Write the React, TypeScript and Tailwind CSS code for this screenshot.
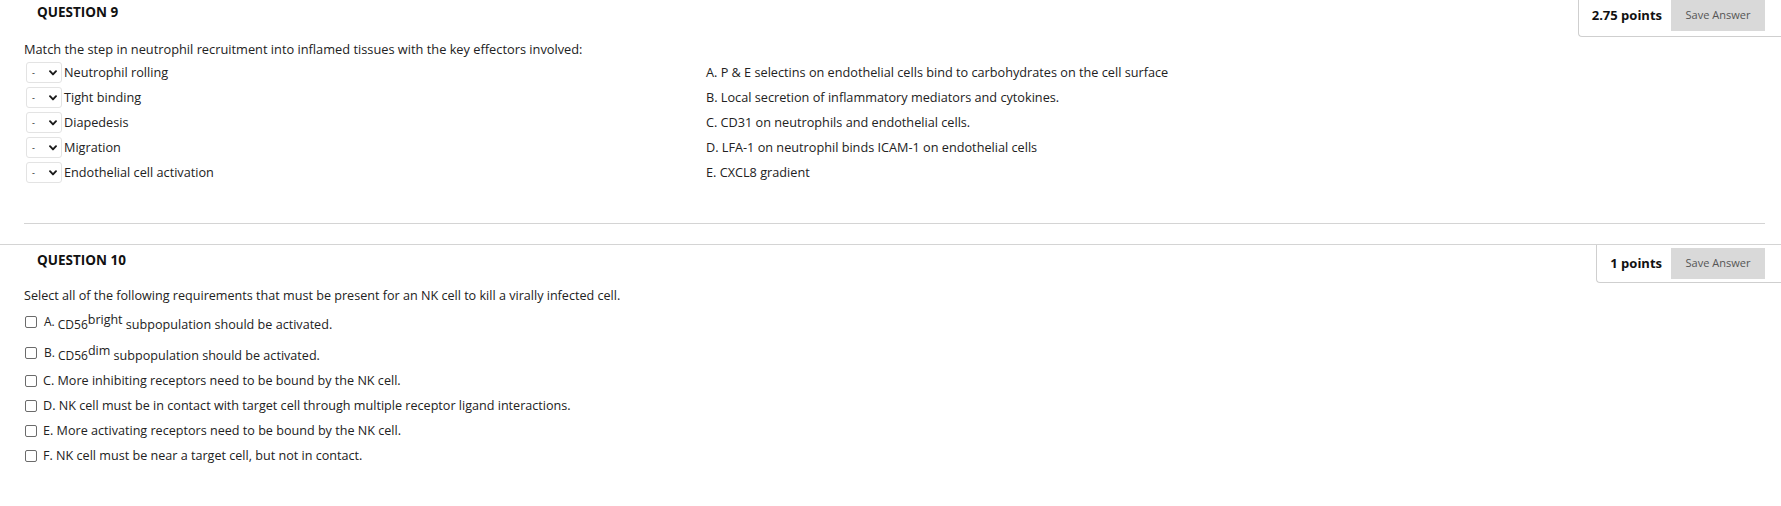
import React from "react";

const font = { fontFamily: '"Open Sans", "Liberation Sans", sans-serif' };

function Chevron() {
  return (
    <svg width="8" height="6" viewBox="0 0 8 6" className="block">
      <path d="M1 1.2 L4 4.4 L7 1.2" stroke="#1a1a1a" strokeWidth="1.9" fill="none" strokeLinecap="round" strokeLinejoin="round" />
    </svg>
  );
}

function MiniSelect() {
  return (
    <div className="w-[36px] h-[21px] shrink-0 border border-[#e3e3e3] rounded-[3px] flex items-center pl-[5px]">
      <span className="text-[9px] leading-none text-[#222] w-[17px]">-</span>
      <Chevron />
    </div>
  );
}

function Box() {
  return <span className="inline-block w-[12px] h-[12px] shrink-0 border border-[#6b6b6b] rounded-[2px] bg-white" />;
}

function PointsBox({ label, extra }: { label: string; extra: string }) {
  return (
    <div className={`flex items-start border-l border-b border-[#cfcfcf] rounded-bl-[4px] pl-[13px] pr-[16px] ${extra}`}>
      <div className="h-[31px] flex items-center font-bold text-[13px] text-[#111]">{label}</div>
      <div className="w-[94px] h-[31px] ml-[9px] bg-[#d9d9d9] flex items-center justify-center text-[11px] text-[#555]">
        Save Answer
      </div>
    </div>
  );
}

export default function App() {
  const steps = ["Neutrophil rolling", "Tight binding", "Diapedesis", "Migration", "Endothelial cell activation"];
  const effectors = [
    "A. P & E selectins on endothelial cells bind to carbohydrates on the cell surface",
    "B. Local secretion of inflammatory mediators and cytokines.",
    "C. CD31 on neutrophils and endothelial cells.",
    "D. LFA-1 on neutrophil binds ICAM-1 on endothelial cells",
    "E. CXCL8 gradient",
  ];
  const simple = [
    "C. More inhibiting receptors need to be bound by the NK cell.",
    "D. NK cell must be in contact with target cell through multiple receptor ligand interactions.",
    "E. More activating receptors need to be bound by the NK cell.",
    "F. NK cell must be near a target cell, but not in contact.",
  ];
  return (
    <div className="w-[1781px] h-[506px] bg-white text-[#222] overflow-hidden" style={font}>
      {/* Question 9 */}
      <section>
        <div className="flex justify-between items-start h-[37px]">
          <h2 className="pl-[37px] pt-[3px] text-[13.5px] leading-[18px] font-bold text-[#111]">QUESTION 9</h2>
          <PointsBox label="2.75 points" extra="h-[37px]" />
        </div>
        <p className="ml-[24px] mt-[3px] text-[12.8px] leading-[18px]">
          Match the step in neutrophil recruitment into inflamed tissues with the key effectors involved:
        </p>
        <div className="mt-[4px] flex flex-col gap-[4px]">
          {steps.map((s, i) => (
            <div key={s} className="flex items-center h-[21px] text-[12.7px]">
              <div className="w-[706px] pl-[26px] flex items-center gap-[2px]">
                <MiniSelect />
                <span>{s}</span>
              </div>
              <span>{effectors[i]}</span>
            </div>
          ))}
        </div>
        <div className="mt-[40px] ml-[24px] mr-[16px] border-t border-[#d4d4d4]" />
      </section>

      {/* Question 10 */}
      <section className="mt-[20px] border-t border-[#d4d4d4]">
        <div className="flex justify-between items-start h-[38px]">
          <h2 className="pl-[37px] pt-[6px] text-[13.5px] leading-[18px] font-bold text-[#111]">QUESTION 10</h2>
          <PointsBox label="1 points" extra="h-[38px] pt-[3px]" />
        </div>
        <p className="ml-[24px] mt-[4px] text-[12.6px] leading-[18px]">
          Select all of the following requirements that must be present for an NK cell to kill a virally infected cell.
        </p>
        <div className="ml-[25px] mt-[8px] text-[12.6px]">
          <div className="flex items-start h-[31px]">
            <div className="flex items-center gap-[7px] pt-[2px]">
              <Box />
              <span className="text-[12px] leading-[14px]">A.</span>
            </div>
            <div className="ml-[3px] pt-[3px] leading-[18px]">
              <span className="text-[12px]">CD56</span>
              <sup className="text-[12.5px] relative top-[-5px]">bright</sup>{" "}
              <span>subpopulation should be activated.</span>
            </div>
          </div>
          <div className="flex items-start h-[30px]">
            <div className="flex items-center gap-[7px] pt-[2px]">
              <Box />
              <span className="text-[12px] leading-[14px]">B.</span>
            </div>
            <div className="ml-[3px] pt-[3px] leading-[18px]">
              <span className="text-[12px]">CD56</span>
              <sup className="text-[12.5px] relative top-[-5px]">dim</sup>{" "}
              <span>subpopulation should be activated.</span>
            </div>
          </div>
          <div className="flex flex-col gap-[7px] mt-[-2px]">
            {simple.map((t) => (
              <div key={t} className="flex items-center gap-[6px] h-[18px]">
                <Box />
                <span className="leading-[18px]">{t}</span>
              </div>
            ))}
          </div>
        </div>
      </section>
    </div>
  );
}
